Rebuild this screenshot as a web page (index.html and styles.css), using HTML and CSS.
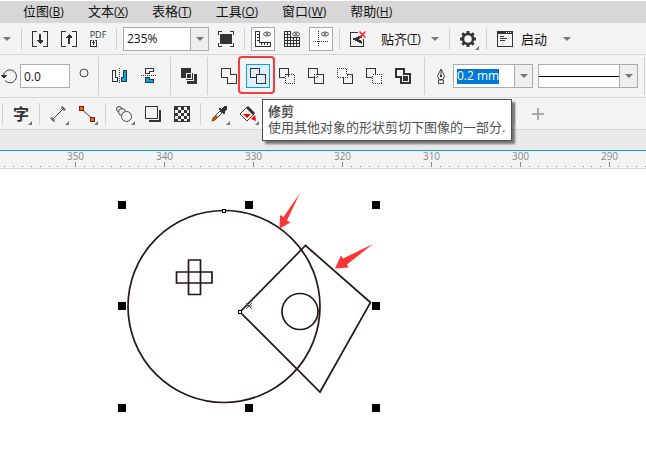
FILE: index.html
```html
<!DOCTYPE html>
<html lang="zh-CN">
<head>
<meta charset="utf-8">
<title>绘图</title>
<link rel="stylesheet" href="styles.css">
</head>
<body>
<nav class="menu">
  <button>位图<span>(<u>B</u>)</span></button>
  <button>文本<span>(<u>X</u>)</span></button>
  <button>表格<span>(<u>T</u>)</span></button>
  <button>工具<span>(<u>O</u>)</span></button>
  <button>窗口<span>(<u>W</u>)</span></button>
  <button>帮助<span>(<u>H</u>)</span></button>
</nav>

<div class="bar standard">
  <button class="caret" aria-label="更多"><svg width="8" height="4"><path class="fade" d="M0 0h8L4 4z"/></svg></button>
  <i class="divider"></i>
  <button class="tool" aria-label="导入"><svg width="16" height="16"><path class="line" d="M5 .5H.5v15H5M11 .5h4.5v15H11"/><path d="M7 3h2v6h2v1L8 13 5 10V9h2z"/></svg></button>
  <button class="tool" aria-label="导出"><svg width="16" height="16"><path class="line" d="M5 .5H.5v15H5M11 .5h4.5v15H11"/><path d="M7 13h2V7h2V6L8 3 5 6v1h2z"/></svg></button>
  <button class="tool pdf"><span>PDF</span><svg width="16" height="7"><path d="M0 0h2v1H1v5h5V1H5V0h2v7H0zM3 0h1v5H3zM2 2h3v1H2z"/></svg></button>
  <i class="divider"></i>
  <div class="combo zoom">
    <input aria-label="缩放级别" value="235%">
    <button class="drop" aria-label="选择缩放级别"><svg width="8" height="4"><path class="fade" d="M0 0h8L4 4z"/></svg></button>
  </div>
  <button class="tool" aria-label="全屏预览"><svg width="16" height="16"><path class="line" d="M.5 4V.5H4M12 .5h3.500V4M.5 12v3.500H4M12 15.500h3.500V12"/><path d="M2 3h12v10H2z"/></svg></button>
  <i class="divider"></i>
  <button class="tool pressed" aria-label="显示标尺"><svg width="16" height="16"><path class="line" d="M.5.5h4v11h11v4H.5zM2 3.500h2M2 6.500h2M2 9.500h2M6.500 12v2M9.500 12v2M12.500 12v2"/><g class="eye"><ellipse cx="12" cy="3" rx="3.500" ry="2"/><circle cx="12" cy="3" r="1"/></g></svg></button>
  <button class="tool" aria-label="显示网格"><svg width="16" height="16"><path class="line" d="M7 .5H.5v15h15V6M0 3.500h7M0 6.500h16M0 9.500h16M0 12.500h16M3.500 0v16M6.500 0v16M9.500 6v10M12.500 6v10"/><g class="eye"><ellipse cx="12" cy="3" rx="3.500" ry="2"/><circle cx="12" cy="3" r="1"/></g></svg></button>
  <button class="tool pressed" aria-label="显示辅助线"><svg width="16" height="16"><path class="line dots" d="M5.500 0v16M0 10.500h16"/><g class="eye"><ellipse cx="12" cy="3" rx="3.500" ry="2"/><circle cx="12" cy="3" r="1"/></g></svg></button>
  <i class="divider"></i>
  <button class="tool" aria-label="关闭贴齐"><svg width="16" height="16"><path class="line" d="M8 1.500H.5v14h13V8"/><path d="M2 8l10-4v3l-4 1 4 2v3z"/><path class="no" d="M9.500.5l6 6M15.500.5l-6 6"/></svg></button>
  <button class="label snap">贴齐<span>(<u>T</u>)</span><svg width="8" height="4"><path class="fade" d="M0 0h8L4 4z"/></svg></button>
  <i class="divider"></i>
  <button class="tool more" aria-label="选项"><svg width="16" height="16"><circle class="gear" cx="8" cy="8" r="5"/><path class="teeth" d="M8 0v3M8 13v3M0 8h3M13 8h3M2.300 2.300l2 2M11.700 11.700l2 2M2.300 13.700l2-2M11.700 4.300l2-2"/></svg></button>
  <i class="divider"></i>
  <button class="label launch"><svg width="16" height="16"><path class="line" d="M.5.5h15v15H.5z"/><path d="M0 0h16v3H0z"/><path class="pale" d="M9 1h1v1H9zM11 1h1v1h-1zM13 1h1v1h-1z"/><path class="line" d="M3 5.500h4M3 7.500h7M3 9.500h5"/></svg>启动</button>
  <button class="caret spaced" aria-label="启动选项"><svg width="8" height="4"><path class="fade" d="M0 0h8L4 4z"/></svg></button>
</div>

<div class="bar property">
  <label class="rotation"><svg width="18" height="16"><path class="smooth" d="M5 12.500A6.500 6.500 0 1 0 3.500 8"/><path d="M1 7h6l-3 4z"/></svg><input aria-label="旋转角度" value="0.0"></label>
  <svg class="degree" width="14" height="24"><circle class="smooth" cx="9" cy="9" r="4"/></svg>
  <i class="divider"></i>
  <button class="tool" aria-label="水平镜像"><svg width="16" height="16"><path class="line" d="M.5 2.500h3v7h2v4h-5z"/><path class="cyan" d="M14.500 2.500h-3v7h-2v4h5z"/><path class="line dots" d="M7.500 0v16"/></svg></button>
  <button class="tool" aria-label="垂直镜像"><svg width="16" height="16"><path class="line" d="M4.500.5h8v3h-4v2h-4z"/><path class="cyan" d="M4.500 14.500h8v-3h-4v-2h-4z"/><path class="line dots" d="M0 7.500h16"/></svg></button>
  <i class="divider"></i>
  <button class="tool narrow" aria-label="合并"><svg width="16" height="16"><path d="M0 0h10v5H5v5H0z"/><path d="M11 5h1v7H5v-1h6zM6 6h4v4H6zM13 6h3v10H6v-3h7z"/></svg></button>
  <i class="divider"></i>
  <button class="tool" aria-label="焊接"><svg width="16" height="16"><path class="line" d="M.5.5h9v6h6v9h-9v-6h-6z"/></svg></button>
  <div class="trim">
    <button class="tool active" aria-label="修剪" aria-describedby="tip"><svg width="16" height="16"><path class="line" d="M6 9.500H.5v-9h9V6M6.500 6.500h9v9h-9z"/></svg></button>
    <div class="mark"></div>
    <div class="tip" id="tip" role="tooltip"><b>修剪</b><br>使用其他对象的形状剪切下图像的一部分.</div>
  </div>
  <button class="tool" aria-label="相交"><svg width="16" height="16"><path class="line" d="M6 9.500H.5v-9h9V6M6 6.500h3.500V9"/><path class="line dots" d="M6.500 6v9.500h9v-9H10"/></svg></button>
  <button class="tool" aria-label="简化"><svg width="16" height="16"><path class="line" d="M6 9.500H.5v-9h9V6M10 6.500h5.500v9h-9V10"/><path class="line dots" d="M6 6.500h4M6.500 6v4M9.500 6v4M6 9.500h4"/></svg></button>
  <button class="tool" aria-label="移除后面对象"><svg width="16" height="16"><path class="line dots" d="M6 9.500H.5v-9h9V6"/><path class="line" d="M10 6.500h5.500v9h-9V10"/><path class="line dots" d="M6 9.500h4V6"/></svg></button>
  <button class="tool" aria-label="移除前面对象"><svg width="16" height="16"><path class="line" d="M6 9.500H.5v-9h9V6"/><path class="line dots" d="M6.500 6.500h9v9h-9z"/></svg></button>
  <button class="tool" aria-label="创建边界"><svg width="16" height="16"><path class="thick" d="M1 1h8v5h6v9H6V9H1z"/><path d="M8 8h5v5H8z"/></svg></button>
  <i class="divider"></i>
  <svg class="pen" width="14" height="16"><path class="smooth" d="M7 1L3.500 8 5 11.500h4L10.500 8zM7 2v6M4.500 12h5v3.500h-5z"/><circle cx="7" cy="8" r="1"/></svg>
  <div class="combo width">
    <input aria-label="轮廓宽度" value="0.2 mm">
    <button class="drop" aria-label="选择轮廓宽度"><svg width="8" height="4"><path class="fade" d="M0 0h8L4 4z"/></svg></button>
  </div>
  <div class="combo style">
    <select aria-label="线条样式"><option label=" "></option></select>
    <span class="drop"><svg width="8" height="4"><path class="fade" d="M0 0h8L4 4z"/></svg></span>
  </div>
  <i class="divider"></i>
</div>

<div class="bar toolbox">
  <i class="divider"></i>
  <button class="tool more text">字</button>
  <i class="divider"></i>
  <button class="tool more" aria-label="平行度量"><svg width="16" height="16"><path class="smooth" d="M2 14L14 2M0 11.500L4.500 16M11.500 0L16 4.500M2 11v3h3M11 2h3v3"/></svg></button>
  <button class="tool more" aria-label="连接器"><svg width="16" height="16"><path class="smooth" d="M2 3l12 10"/><path class="orange" d="M.5.5h4v4h-4zM11.500 11.500h4v4h-4z"/></svg></button>
  <i class="divider"></i>
  <button class="tool more" aria-label="调和"><svg width="16" height="16"><g class="smooth hollow"><circle cx="3" cy="3" r="2.500"/><circle cx="6" cy="6" r="3.500"/><circle cx="10.500" cy="10.500" r="5"/></g></svg></button>
  <button class="tool" aria-label="阴影"><svg width="16" height="16"><path class="line" d="M.5.500h12v12H.5z"/><path d="M14 4h2v12H4v-2h10z"/></svg></button>
  <button class="tool" aria-label="透明度"><svg width="16" height="16"><path class="line" d="M.5.5h15v15H.5z"/><path class="check" d="M2.500 1v14M8.500 1v14M14 1v14" /><path class="check alt" d="M5.500 1v14M11.500 1v14"/></svg></button>
  <i class="divider"></i>
  <button class="tool more" aria-label="颜色滴管"><svg width="16" height="16"><path class="smooth" d="M1 15l1-3 7-7 2 2-7 7z"/><path class="rust" d="M1 15l1-3 3-3 2 2-3 3z"/><path d="M7 3l2-1 1 1 3-3h2l1 1v2l-3 3 1 1-1 2z"/></svg></button>
  <button class="tool more" aria-label="交互式填充"><svg width="16" height="16"><path class="smooth" d="M7 1l7 7-7 7-7-7z"/><path class="ink" d="M7 1l7 7"/><path class="red" d="M3 8h8l-4 4zM11 13l4-4 1 6z"/></svg></button>
  <div class="rest">
    <i class="divider"></i>
    <button class="tool" aria-label="添加"><svg width="12" height="12"><path class="plus" d="M6 0v12M0 6h12"/></svg></button>
  </div>
</div>

<svg class="defs" width="0" height="0"><symbol id="ticks" viewBox="0 0 89 7"><path class="tick" d="M0 5h1v1H0zM9 5h1v1H9zM18 5h1v1h-1zM26 5h1v1h-1zM35 5h1v1h-1zM44 1h1v5h-1zM53 5h1v1h-1zM62 5h1v1h-1zM71 5h1v1h-1zM80 5h1v1h-1z"/></symbol></svg>
<div class="ruler">
  <div><svg width="89" height="7"><use href="#ticks"/></svg></div>
  <div>350<svg width="89" height="7"><use href="#ticks"/></svg></div>
  <div>340<svg width="89" height="7"><use href="#ticks"/></svg></div>
  <div>330<svg width="89" height="7"><use href="#ticks"/></svg></div>
  <div>320<svg width="89" height="7"><use href="#ticks"/></svg></div>
  <div>310<svg width="89" height="7"><use href="#ticks"/></svg></div>
  <div>300<svg width="89" height="7"><use href="#ticks"/></svg></div>
  <div>290<svg width="89" height="7"><use href="#ticks"/></svg></div>
</div>

<main class="canvas">
  <svg viewBox="0 169 646 293" width="646" height="293" role="img" aria-label="图形">
    <g class="shape">
      <circle cx="224" cy="306.500" r="96"/>
      <path d="M240 312L305.500 245.500 370.500 302.500 320 392z"/>
      <circle cx="300" cy="311.500" r="18"/>
      <path d="M188.500 260h12v34.500h-12zM176.500 272h35.500v11h-35.500z"/>
    </g>
    <path class="center" d="M246 303l6 6M252 303l-6 6M246 306h6"/>
    <path class="handle" d="M118 201h8v8h-8zM245 201h8v8h-8zM372 201h8v8h-8zM118 302h8v8h-8zM372 302h8v8h-8zM118 404h8v8h-8zM245 404h8v8h-8zM372 404h8v8h-8z"/>
    <path class="node" d="M222.500 209.500h3v3h-3zM238.500 310.500h3v3h-3z"/>
    <path class="arrow" d="M300 193L283.500 217 280 215 279.500 228.500 290.500 222.500 287 220.500zM373 244L343 258.500 341 255.500 335 268.500 348.500 267.500 347 264.500z"/>
  </svg>
</main>
</body>
</html>
```
FILE: styles.css
```css
* { box-sizing: border-box; }
body {
  margin: 0;
  padding-top: 1px;
  background: #fff;
  color: #111;
  font: 13px/16px "Open Sans", "Noto Sans CJK SC", sans-serif;
  overflow-x: hidden;
}
button, input, select {
  margin: 0;
  padding: 0;
  border: 0;
  background: none;
  color: inherit;
  font: inherit;
  outline: 0;
}
svg { display: block; flex: none; fill: #333; shape-rendering: crispEdges; }

.menu {
  display: flex;
  gap: 24px;
  height: 22px;
  padding: 0 0 2px 23px;
  background: #d7d7d7;
}
.menu button, .label { white-space: nowrap; }
.menu span, .label span { font-size: 12px; }
u { text-underline-offset: 1px; }

.bar {
  display: flex;
  align-items: center;
  gap: 5px;
  background: #f4f4f4;
  border-bottom: 1px solid #d5d5d5;
}
.divider { flex: none; width: 1px; height: 22px; margin: 0 1px; background: #d2d2d2; }
.standard { height: 32px; margin-left: -1px; }
.property { height: 43px; }
.property .divider { height: 38px; margin: 0 4px; }
.property > .divider:last-child { margin-left: 1px; }
.toolbox { height: 32px; padding-left: 1px; }

.tool {
  display: flex;
  flex: none;
  align-items: center;
  justify-content: center;
  width: 24px;
  height: 24px;
  position: relative;
}
.narrow { width: 18px; }
.pressed { background: #fff; border: 1px solid #ababab; }
.active { background: #dfefff; border: 1px solid #00a2ed; }
.more::after {
  content: "";
  position: absolute;
  right: 1px;
  bottom: 1px;
  border: 2px solid #777;
  border-top-color: transparent;
  border-left-color: transparent;
}
.text { font-size: 16px; font-weight: 700; color: #333; }
.pdf { flex-direction: column; gap: 1px; }
.pdf span { font-size: 9px; line-height: 8px; color: #333; }
.caret { display: flex; flex: none; align-items: center; justify-content: center; width: 16px; height: 24px; }
.spaced { margin-left: 7px; }
.label { display: flex; align-items: center; flex: none; height: 24px; }
.snap { width: 68px; padding: 0 4px 0 6px; }
.snap svg { margin-left: auto; }
.launch { gap: 8px; padding-left: 4px; }

.combo {
  display: flex;
  flex: none;
  align-items: center;
  height: 24px;
  background: #fff;
  border: 1px solid #ababab;
  font-size: 12px;
}
.combo input { flex: 1; min-width: 0; padding-left: 3px; }
.drop {
  display: flex;
  flex: none;
  align-items: center;
  justify-content: center;
  width: 18px;
  height: 22px;
  background: #eee;
  border-left: 1px solid #ababab;
}
.zoom { width: 86px; }
.width { width: 80px; padding-left: 3px; justify-content: space-between; }
.width input { flex: none; width: 42px; height: 15px; padding: 0; background: #0078d7; color: #fff; }
.style { width: 100px; }
.style select {
  flex: 1;
  height: 22px;
  appearance: none;
  background: linear-gradient(#000, #000) center / 100% 1px no-repeat;
}
.rotation { display: flex; flex: none; align-items: center; gap: 2px; }
.rotation input { width: 50px; height: 24px; padding-left: 3px; background: #fff; border: 1px solid #ababab; font-size: 12px; }

.trim { position: relative; flex: none; }
.mark {
  position: absolute;
  inset: -8px -5px -6px -8px;
  border: 2px solid #fa3c38;
  border-radius: 4px;
  pointer-events: none;
}
.tip {
  position: absolute;
  z-index: 2;
  top: 35px;
  left: 16px;
  padding: 3px 6px 5px 5px;
  background: #fff;
  border: 1px solid #505050;
  box-shadow: 3px 3px 2px rgba(0, 0, 0, .5);
  color: #505050;
  white-space: nowrap;
}
.rest { display: flex; align-items: center; gap: 10px; margin-left: 248px; }

.ruler {
  display: flex;
  height: 39px;
  padding-top: 20px;
  background: linear-gradient(#e9e9e9 20px, #00a2e0 20px, #00a2e0 21px, #f4f4f4 21px);
  border-bottom: 1px solid #d5d5d5;
  overflow: hidden;
  color: #888;
  font-size: 10px;
  line-height: 9px;
}
.ruler div { display: flex; flex: none; flex-direction: column; justify-content: flex-end; width: 89px; text-align: center; }
.ruler div:first-child { margin-left: -58px; }
.defs { position: absolute; }
.tick { fill: #888; }

.line { fill: none; stroke: #333; }
.dots { stroke-dasharray: 1 1; }
.smooth { fill: none; stroke: #444; shape-rendering: auto; }
.hollow { fill: #f4f4f4; }
.thick { fill: none; stroke: #333; stroke-width: 2; }
.fade { fill: #777; shape-rendering: auto; }
.eye { fill: #fff; stroke: #555; shape-rendering: auto; }
.pale { fill: #fff; }
.no { stroke: #f22; stroke-width: 1.500; shape-rendering: auto; }
.gear { fill: none; stroke: #333; stroke-width: 2.500; shape-rendering: auto; }
.teeth { stroke: #333; stroke-width: 3; shape-rendering: auto; }
.cyan { fill: #00a8f3; stroke: #333; }
.orange { fill: #f60; stroke: #722; }
.rust { fill: #c50; shape-rendering: auto; }
.red { fill: #f00; shape-rendering: auto; }
.ink { stroke: #333; stroke-width: 3; shape-rendering: auto; }
.check { stroke: #333; stroke-width: 3; stroke-dasharray: 3 3; }
.alt { stroke-dashoffset: 3; }
.plus { stroke: #aaa; stroke-width: 2; }

.canvas { background: #fff; overflow: hidden; }
.shape { fill: none; stroke: #231815; stroke-width: 1.700; shape-rendering: auto; }
.center { stroke: #555; shape-rendering: auto; }
.handle { fill: #000; }
.node { fill: #fff; stroke: #000; }
.arrow { fill: #fa3735; shape-rendering: auto; }
```
